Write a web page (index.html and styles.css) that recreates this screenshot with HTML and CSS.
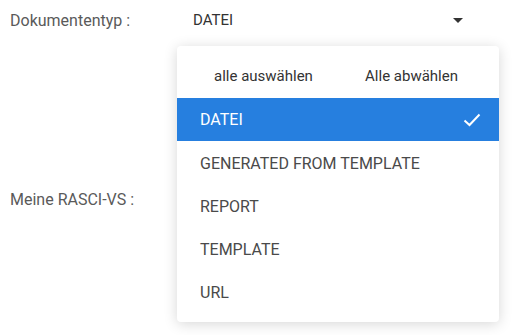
FILE: index.html
```html
<!DOCTYPE html>
<html lang="de">
<head>
    <meta charset="UTF-8">
    <title>Dokumentenfilter</title>
    <meta name="viewport" content="width=device-width, initial-scale=1">
    <link rel="stylesheet" href="styles.css">
</head>
<body>
    <div class="filter-form">
        <div class="field field-doc">
            <label class="field-label">Dokumententyp :</label>
            <div class="select">
                <span class="select-value">DATEI</span>
                <span class="select-arrow"></span>
            </div>

            <div class="dropdown">
                <div class="dropdown-actions">
                    <button class="action-btn">alle auswählen</button>
                    <button class="action-btn">Alle abwählen</button>
                </div>
                <ul class="option-list">
                    <li class="option selected">
                        DATEI
                        <svg class="check" width="18" height="14" viewBox="0 0 18 14">
                            <path d="M1.5 7.5 L6.5 12 L16.5 1.5" fill="none" stroke="#fff" stroke-width="2"/>
                        </svg>
                    </li>
                    <li class="option">GENERATED FROM TEMPLATE</li>
                    <li class="option">REPORT</li>
                    <li class="option">TEMPLATE</li>
                    <li class="option">URL</li>
                </ul>
            </div>
        </div>

        <div class="field field-rasci">
            <label class="field-label">Meine RASCI-VS :</label>
        </div>
    </div>
</body>
</html>
```

FILE: styles.css
```css
html, body {
    min-height: 335px;
}

body {
    font-family: Roboto, "Liberation Sans", sans-serif;
    margin: 0;
    background: #fff;
    color: #333;
}

.filter-form {
    padding: 0 10px;
}

.field {
    display: flex;
    align-items: center;
    height: 40px;
}

.field-doc {
    position: relative;
    z-index: 2;
}

.field-rasci {
    margin-top: 139px;
}

.field-label {
    width: 183px;
    font-size: 16px;
    color: #5a5a5a;
}

.select {
    display: flex;
    align-items: center;
    justify-content: space-between;
    width: 270px;
}

.select-value {
    font-size: 15px;
    color: #333;
}

.select-arrow {
    width: 0;
    height: 0;
    border-left: 5px solid transparent;
    border-right: 5px solid transparent;
    border-top: 5px solid #333;
}

.dropdown {
    position: absolute;
    top: 46px;
    left: 167px;
    width: 322px;
    background: #fff;
    border-radius: 4px;
    box-shadow: 0 2px 14px rgba(0,0,0,0.16);
    padding-bottom: 9px;
}

.dropdown-actions {
    display: flex;
    justify-content: space-between;
    align-items: center;
    height: 44px;
    padding: 8px 41px 0 37px;
}

.action-btn {
    background: none;
    border: none;
    font-family: inherit;
    font-size: 15px;
    color: #333;
    padding: 0;
    cursor: pointer;
}

.option-list {
    list-style: none;
    margin: 0;
    padding: 0;
}

.option {
    display: flex;
    align-items: center;
    justify-content: space-between;
    box-sizing: border-box;
    height: 43px;
    padding: 2px 18px 0 23px;
    font-size: 16px;
    color: #4a4a4a;
}

.option.selected {
    background: #267fdf;
    color: #fff;
    padding-top: 0;
}
```
